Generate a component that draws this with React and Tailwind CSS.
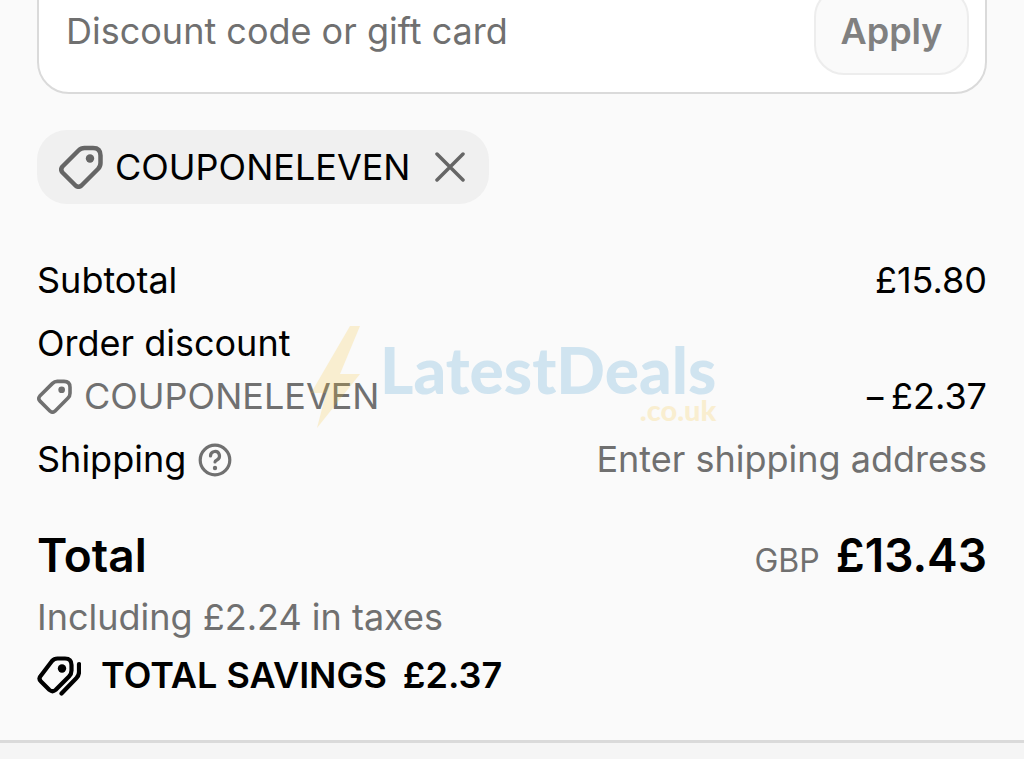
import { useState } from 'react';

const TagIcon = ({ className }) => (
  <svg viewBox="0 0 44 44" fill="none" className={className} aria-hidden="true">
    <path d="M25.500 3h8.500q7.500 0 7.500 7.500v7.500q0 3.500-2.500 6L22.500 40.500q-3 2.500-6 0L3.500 27.500q-2.500-3 0-6L19.500 5.500q2.500-2.500 6-2.500z" stroke="currentColor" strokeWidth="4.500" strokeLinejoin="round" />
    <circle cx="31" cy="13.500" r="4.200" fill="currentColor" />
  </svg>
);

const SavingsIcon = ({ className }) => (
  <svg viewBox="0 0 44 40" fill="none" stroke="currentColor" strokeWidth="4.200" strokeLinecap="round" strokeLinejoin="round" className={className} aria-hidden="true">
    <path d="M20.500 2.500h7.500q6.500 0 6.500 6.500v5.500q0 3.500-2.500 6L18.500 34q-3 2.500-6 0L4 25.500q-3-3 0-6L15 5q2.200-2.500 5.500-2.500z" />
    <path d="M42 8v8q0 3.500-2.500 6L24.500 37.500" />
    <circle cx="25" cy="12.500" r="4.200" fill="currentColor" stroke="none" />
  </svg>
);

const HelpIcon = () => (
  <svg viewBox="0 0 34 34" fill="none" stroke="currentColor" strokeWidth="3.200" strokeLinecap="round" className="size-[34px]" aria-hidden="true">
    <circle cx="17" cy="17" r="14.800" />
    <path d="M12.500 13a4.500 4.500 0 1 1 6.500 4q-2 1-2 2" />
    <circle cx="17" cy="25" r="2.200" fill="currentColor" stroke="none" />
  </svg>
);

const Watermark = () => (
  <div className="pointer-events-none absolute left-[307px] top-[326px] flex opacity-20 font-['Lato',sans-serif] select-none">
    <svg viewBox="0 0 53 102" className="h-[102px] w-[53px]" aria-hidden="true">
      <path d="M43 0H53L33 48H53L10 102L19 67H4Z" fill="#f9c22e" />
    </svg>
    <div className="ml-[20px] mt-[12px] text-right">
      <p className="text-[64px] leading-[64px] font-black text-[#2d8fcb]">LatestDeals</p>
      <p className="text-[29px] leading-[16px] font-black text-[#f9c22e]">.co.uk</p>
    </div>
  </div>
);

const App = () => {
  const [code, setCode] = useState('');
  const [coupon, setCoupon] = useState('COUPONELEVEN');

  const applyCode = (e) => {
    e.preventDefault();
    if (code) setCoupon(code);
    setCode('');
  };

  return (
    <div className="min-h-screen overflow-hidden bg-[#f5f5f5] font-['Inter',sans-serif] text-[36px] leading-[53px] text-black">
      <main className="relative flow-root border-b-[3px] border-[#dadada] bg-[#fafafa] px-[37px] pb-[38px]">
        <form onSubmit={applyCode} className="-mt-8 flex h-[126px] items-center rounded-[32px] border-2 border-[#dadada] bg-white pl-[27px] pr-4">
          <input
            aria-label="Discount code or gift card"
            placeholder="Discount code or gift card"
            value={code}
            onChange={(e) => setCode(e.target.value)}
            className="min-w-0 flex-1 outline-none placeholder:text-[#707070]"
          />
          <button type="submit" className="h-[88px] w-[155px] rounded-[30px] border-2 border-[#ededed] bg-[#fafafa] font-semibold text-[#808080]">Apply</button>
        </form>

        {coupon && (
          <div className="mt-9 flex h-[74px] w-fit items-center rounded-[30px] bg-[#f0f0f0] px-[22px]">
            <TagIcon className="size-11 text-[#666]" />
            <span className="ml-3">{coupon}</span>
            <button type="button" aria-label="Remove coupon" onClick={() => setCoupon('')} className="ml-6 text-[#666]">
              <svg viewBox="0 0 32 32" fill="none" stroke="currentColor" strokeWidth="3.500" strokeLinecap="round" className="size-8">
                <path d="M2 3l26 26M28 3L2 29" />
              </svg>
            </button>
          </div>
        )}

        <dl className="mt-[50px]">
          <div className="flex justify-between">
            <dt>Subtotal</dt>
            <dd>£15.80</dd>
          </div>
          <div className="mt-[10px] flex items-end justify-between">
            <dt>
              <p>Order discount</p>
              <p className="flex items-center gap-3 text-[#707070]">
                <TagIcon className="size-[35px]" />
                {coupon}
              </p>
            </dt>
            <dd className="flex gap-1"><span>−</span>£2.37</dd>
          </div>
          <div className="mt-[10px] flex justify-between">
            <dt className="flex items-center gap-3">
              Shipping
              <button type="button" aria-label="Shipping help" className="text-[#707070]"><HelpIcon /></button>
            </dt>
            <dd className="text-[#707070]">Enter shipping address</dd>
          </div>
          <div className="mt-[39px] flex items-baseline justify-between text-[46px] leading-[60px] font-semibold">
            <dt>Total</dt>
            <dd className="flex items-baseline gap-4">
              <span className="text-[32px] font-normal text-[#707070]">GBP</span>
              £13.43
            </dd>
          </div>
        </dl>
        <p className="text-[#707070]">Including £2.24 in taxes</p>
        <p className="mt-[5px] flex items-center font-semibold">
          <SavingsIcon className="mr-5 h-10 w-11" />
          <span className="mr-4">TOTAL SAVINGS</span>
          £2.37
        </p>
        <Watermark />
      </main>
    </div>
  );
};

export default App;
